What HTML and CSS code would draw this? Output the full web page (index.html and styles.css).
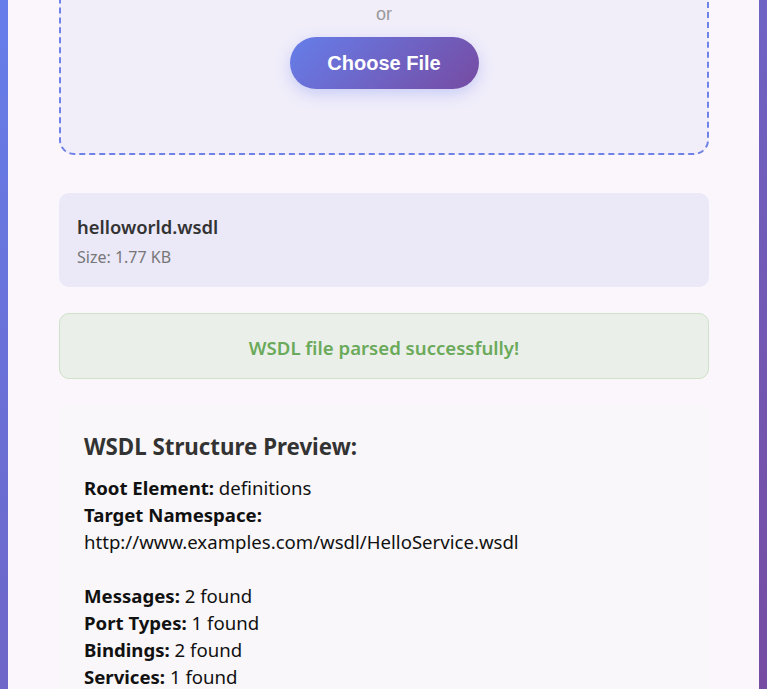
FILE: index.html
```html
<!DOCTYPE html>
<html lang="en">
<head>
<meta charset="utf-8">
<title>WSDL Parser</title>
<link rel="stylesheet" href="styles.css">
</head>
<body>
<main class="card">
  <section class="drop-zone">
    <p class="or">or</p>
    <button class="choose-btn" type="button">Choose File</button>
  </section>

  <section class="file-info">
    <div class="file-name">helloworld.wsdl</div>
    <div class="file-size">Size: 1.77 KB</div>
  </section>

  <section class="status success">WSDL file parsed successfully!</section>

  <section class="preview">
    <h3 class="preview-title">WSDL Structure Preview:</h3>
    <div class="preview-body">
      <strong>Root Element:</strong> definitions<br>
      <strong>Target Namespace:</strong><br>
      http://www.examples.com/wsdl/HelloService.wsdl<br><br>
      <strong>Messages:</strong> 2 found<br>
      <strong>Port Types:</strong> 1 found<br>
      <strong>Bindings:</strong> 2 found<br>
      <strong>Services:</strong> 1 found<br>
      <strong>Operations:</strong> 1 found
    </div>
  </section>
</main>
</body>
</html>
```
FILE: styles.css
```css
html, body {
  margin: 0;
  padding: 0;
  height: 100%;
  overflow: hidden;
}
body {
  background: linear-gradient(135deg, #667eea 0%, #764ba2 100%);
  padding: 0 8px;
  font-family: "Segoe UI", "Noto Sans", sans-serif;
  color: #333;
}
.card {
  background: #faf6fb;
  min-height: 100%;
  padding: 0 50px 40px 51px;
  display: flex;
  flex-direction: column;
}
.drop-zone {
  margin-top: -60px;
  height: 215px;
  box-sizing: border-box;
  border: 2px dashed #6f82e8;
  border-radius: 15px;
  background: #f1eefa;
  display: flex;
  flex-direction: column;
  align-items: center;
}
.or {
  margin: 60px 0 11px;
  font-family: "Liberation Sans", Arial, sans-serif;
  font-size: 18px;
  color: #999;
  line-height: 24px;
}
.choose-btn {
  width: 189px;
  height: 52px;
  border: none;
  border-radius: 26px;
  background: linear-gradient(135deg, #667eea 0%, #764ba2 100%);
  color: #fff;
  font-family: "Liberation Sans", Arial, sans-serif;
  font-weight: bold;
  font-size: 20px;
  box-shadow: 0 5px 15px rgba(102, 126, 234, 0.3);
}
.file-info {
  margin-top: 38px;
  background: #ebe9f8;
  border-radius: 10px;
  padding: 20px 18px;
  height: 94px;
  box-sizing: border-box;
}
.file-name {
  font-size: 18.4px;
  font-weight: 600;
  color: #333;
  line-height: 27px;
}
.file-size {
  margin-top: 6px;
  font-size: 16px;
  color: #777;
  line-height: 22px;
}
.status {
  margin-top: 26px;
  height: 66px;
  box-sizing: border-box;
  border-radius: 10px;
  display: flex;
  align-items: center;
  justify-content: center;
  font-size: 18.6px;
  font-weight: 600;
  padding-top: 3px;
}
.success {
  background: #ebefea;
  border: 1px solid #cde2c7;
  color: #6aaa5a;
}
.preview {
  margin-top: 26px;
  background: #f9f7f9;
  border-radius: 10px;
  padding: 25px 25px;
}
.preview-title {
  margin: 0 0 10px;
  font-size: 22.3px;
  font-weight: 700;
  color: #333;
  line-height: 34px;
}
.preview-body {
  font-size: 18.6px;
  line-height: 27px;
  color: #111;
}
.preview-body strong {
  font-weight: 700;
}
```
